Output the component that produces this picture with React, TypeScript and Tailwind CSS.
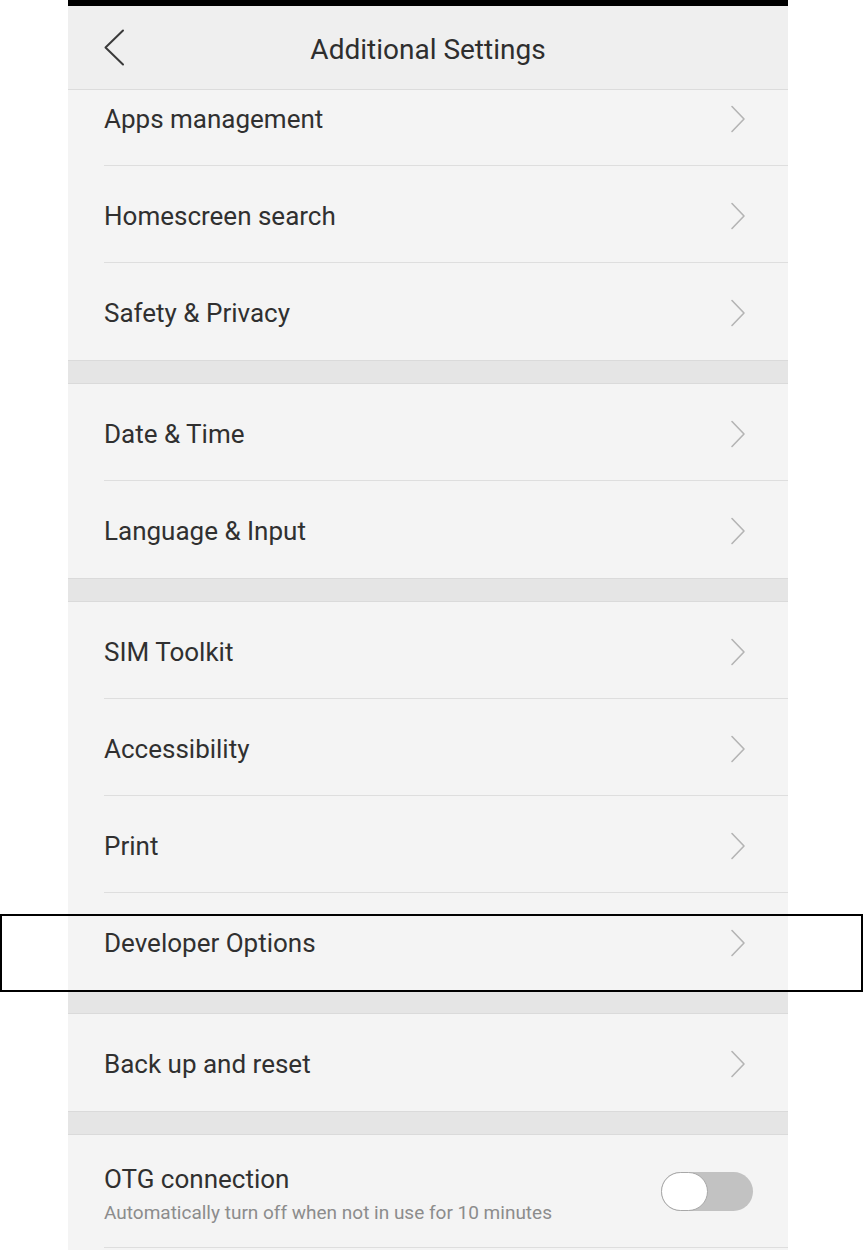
import React from "react";

function Chevron() {
  return (
    <svg width="16" height="28" viewBox="0 0 16 28" fill="none">
      <path d="M2 1.5 L14 14 L2 26.5" stroke="#b4b4b4" strokeWidth="1.6" strokeLinecap="round" strokeLinejoin="round" />
    </svg>
  );
}

function Row({ label, last, first }: { label: string; last?: boolean; first?: boolean }) {
  return (
    <div className={"pl-[36px] bg-[#f4f4f4]" + (first ? " -mt-[21px]" : "")}>
      <div
        className={
          "h-[97px] flex items-center justify-between pr-[42px] pt-[3px]" +
          (last ? "" : " border-b border-[#dedede]")
        }
      >
        <span className="text-[26px] text-[#303030] leading-none">{label}</span>
        <Chevron />
      </div>
    </div>
  );
}

function Gap() {
  return <div className="h-[24px] bg-[#e5e5e5] border-y border-[#dadada]" />;
}

export default function App() {
  return (
    <div
      className="w-[864px] h-[1250px] bg-white relative overflow-hidden"
      style={{ fontFamily: "Roboto, 'Noto Sans', sans-serif" }}
    >
      <div className="ml-[68px] w-[720px] h-[1250px] bg-[#f4f4f4] flex flex-col">
        <div className="h-[6px] bg-black shrink-0" />
        <div className="h-[84px] shrink-0 bg-[#efefef] border-b border-[#dcdcdc] grid grid-cols-[1fr_auto_1fr] items-center relative z-10">
          <div className="pl-[35px] flex items-center">
            <svg width="22" height="37" viewBox="0 0 22 37" fill="none">
              <path d="M20 1.5 L2.5 18.5 L20 35.5" stroke="#3a3a3a" strokeWidth="2" strokeLinecap="round" strokeLinejoin="round" />
            </svg>
          </div>
          <div className="text-[28px] text-[#2e2e2e] leading-none pt-[5px]">Additional Settings</div>
          <div />
        </div>
        <div className="overflow-hidden flex-1 flex flex-col">
          <Row label="Apps management" first />
          <Row label="Homescreen search" />
          <Row label="Safety & Privacy" last />
          <Gap />
          <Row label="Date & Time" />
          <Row label="Language & Input" last />
          <Gap />
          <Row label="SIM Toolkit" />
          <Row label="Accessibility" />
          <Row label="Print" />
          <Row label="Developer Options" last />
          <Gap />
          <Row label="Back up and reset" last />
          <Gap />
          <div className="pl-[36px] bg-[#f4f4f4]">
            <div className="h-[113px] flex items-center justify-between pr-[35px] border-b border-[#dedede]">
              <div className="flex flex-col gap-[11px] pt-[6px]">
                <span className="text-[26px] text-[#303030] leading-none">OTG connection</span>
                <span className="text-[19px] text-[#8c8c8c] leading-none">
                  Automatically turn off when not in use for 10 minutes
                </span>
              </div>
              <div className="w-[92px] h-[39px] rounded-full bg-[#c2c2c2] relative">
                <div className="absolute left-0 top-0 w-[47px] h-[39px] rounded-full bg-white border border-[#a8a8a8]" />
              </div>
            </div>
          </div>
        </div>
      </div>
      <div className="absolute left-0 top-[914px] w-[863px] h-[78px] border-2 border-black pointer-events-none" />
    </div>
  );
}
